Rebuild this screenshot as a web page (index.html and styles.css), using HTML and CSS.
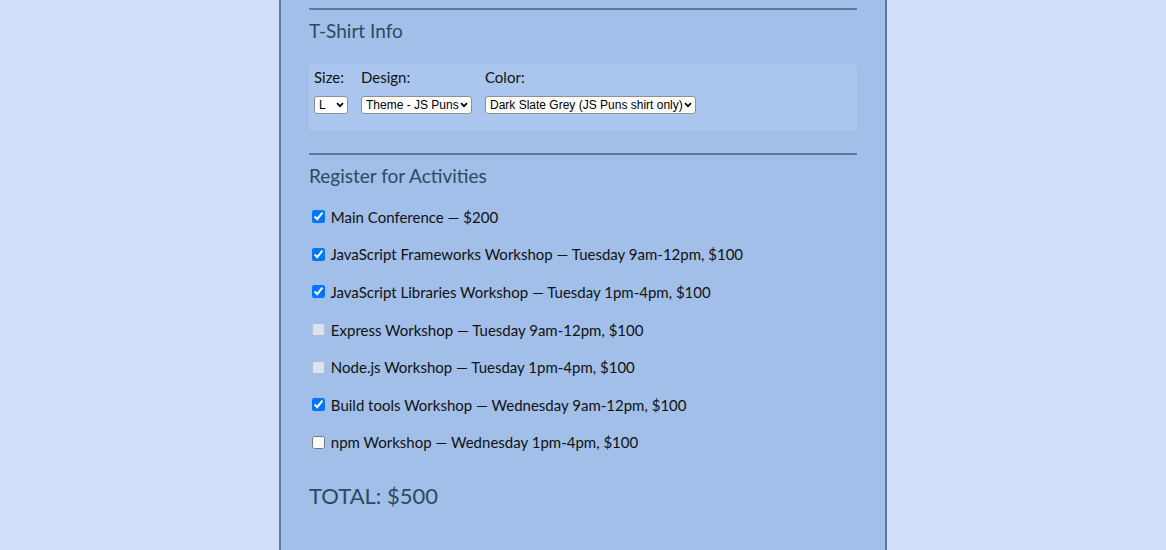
FILE: index.html
```html
<!DOCTYPE html>
<html lang="en">
<head>
<meta charset="utf-8">
<title>Conference Registration</title>
<link rel="stylesheet" href="styles.css">
</head>
<body>
<div class="container">
  <section class="block">
    <hr class="rule">
    <h2 class="heading">T-Shirt Info</h2>
    <div class="shirt-box">
      <div class="field">
        <label class="field-label" for="size">Size:</label>
        <select id="size" class="sel sel-size"><option>L</option></select>
      </div>
      <div class="field">
        <label class="field-label" for="design">Design:</label>
        <select id="design" class="sel sel-design"><option>Theme - JS Puns</option></select>
      </div>
      <div class="field">
        <label class="field-label" for="color">Color:</label>
        <select id="color" class="sel sel-color"><option>Dark Slate Grey (JS Puns shirt only)</option></select>
      </div>
    </div>
  </section>
  <section class="block">
    <hr class="rule rule-second">
    <h2 class="heading">Register for Activities</h2>
    <div class="activities">
      <label class="activity"><input type="checkbox" checked> Main Conference — $200</label>
      <label class="activity"><input type="checkbox" checked> JavaScript Frameworks Workshop — Tuesday 9am-12pm, $100</label>
      <label class="activity"><input type="checkbox" checked> JavaScript Libraries Workshop — Tuesday 1pm-4pm, $100</label>
      <label class="activity"><input type="checkbox" disabled> Express Workshop — Tuesday 9am-12pm, $100</label>
      <label class="activity"><input type="checkbox" disabled> Node.js Workshop — Tuesday 1pm-4pm, $100</label>
      <label class="activity"><input type="checkbox" checked> Build tools Workshop — Wednesday 9am-12pm, $100</label>
      <label class="activity"><input type="checkbox"> npm Workshop — Wednesday 1pm-4pm, $100</label>
    </div>
    <p class="total">TOTAL: $500</p>
  </section>
</div>
</body>
</html>
```
FILE: styles.css
```css
html, body {
  margin: 0;
  padding: 0;
}
body {
  background: #cfe0f8;
  font-family: Lato, "Noto Sans", sans-serif;
  color: #111;
}
.container {
  width: 548px;
  margin: 0 auto;
  padding: 8px 28px 0;
  min-height: 100vh;
  background: #a1bfe9;
  border-left: 2px solid #5a7ba1;
  border-right: 2px solid #5a7ba1;
  box-sizing: content-box;
}
.rule {
  border: none;
  height: 2px;
  background: #5a7ba1;
  margin: 0;
}
.rule-second {
  margin-top: 22px;
}
.heading {
  font-size: 19px;
  line-height: 24px;
  font-weight: 400;
  color: #2c4a60;
  margin: 9px 0 0;
}
.shirt-box {
  margin-top: 21px;
  background: #abc6ee;
  border-radius: 4px;
  padding: 5px 5px 17px;
  display: flex;
  gap: 13px;
}
.field {
  display: flex;
  flex-direction: column;
  align-items: flex-start;
  gap: 11px;
}
.field-label {
  font-size: 15px;
  line-height: 16px;
}
.sel {
  -webkit-appearance: none;
  appearance: none;
  font-family: "Liberation Sans", Arial, sans-serif;
  font-size: 12px;
  line-height: 16px;
  height: 18px;
  margin: 0;
  padding: 0 12px 0 4px;
  border: 1px solid #8f8f8f;
  border-radius: 3px;
  background-color: #fff;
  background-image: url("data:image/svg+xml;utf8,<svg xmlns='http://www.w3.org/2000/svg' width='8' height='6' viewBox='0 0 8 6'><path d='M1 1.2 L4 4.2 L7 1.2' fill='none' stroke='black' stroke-width='1.8'/></svg>");
  background-repeat: no-repeat;
  background-position: right 3px center;
  background-size: 8px 6px;
  color: #000;
  box-sizing: border-box;
}
.sel-size { width: 34px; }
.sel-design { width: 111px; }
.sel-color { width: 211px; }
.activities {
  margin-top: 10px;
  display: flex;
  flex-direction: column;
}
.activity {
  display: flex;
  align-items: center;
  height: 37.6px;
  font-size: 15px;
  white-space: pre;
}
.activity input {
  width: 13px;
  height: 13px;
  margin: 0 2px 0 3px;
}
.total {
  margin: 21px 0 0;
  font-size: 22px;
  line-height: 28px;
  color: #2c4a60;
}
```
